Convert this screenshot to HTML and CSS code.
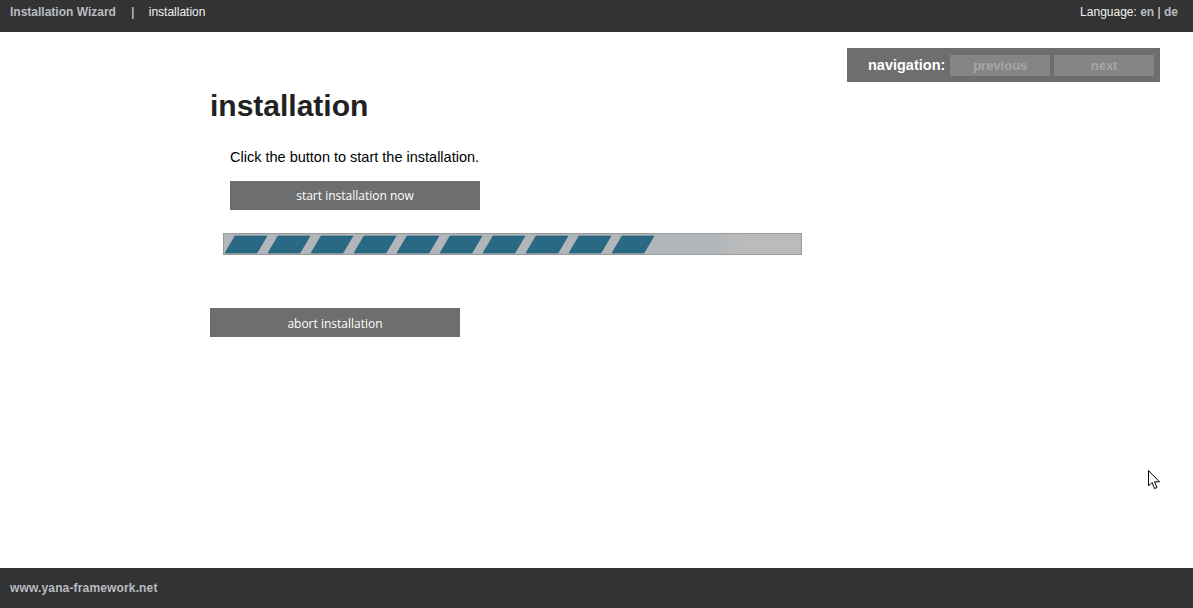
FILE: index.html
```html
<!DOCTYPE html>
<html>
<head>
<meta charset="utf-8">
<link rel="stylesheet" href="styles.css">
</head>
<body>
<div class="page">
  <header class="topbar">
    <div class="crumbs">
      <span class="brand">Installation Wizard</span>
      <span class="sep">|</span>
      <span class="current">installation</span>
    </div>
    <div class="lang">Language: <a class="lang-link">en</a> | <a class="lang-link">de</a></div>
  </header>
  <main class="main">
    <section class="content">
      <h1 class="title">installation</h1>
      <p class="intro">Click the button to start the installation.</p>
      <button class="btn btn-start">start installation now</button>
      <div class="progress">
        <svg class="stripes" width="578" height="20" viewBox="0 0 578 20">
          <g fill="#2a6984" stroke="#245d76" stroke-width="0.6">
            <polygon points="11,2 43,2 33,19 1,19"/>
            <polygon points="54,2 86,2 76,19 44,19"/>
            <polygon points="97,2 129,2 119,19 87,19"/>
            <polygon points="140,2 172,2 162,19 130,19"/>
            <polygon points="183,2 215,2 205,19 173,19"/>
            <polygon points="226,2 258,2 248,19 216,19"/>
            <polygon points="269,2 301,2 291,19 259,19"/>
            <polygon points="312,2 344,2 334,19 302,19"/>
            <polygon points="355,2 387,2 377,19 345,19"/>
            <polygon points="398,2 430,2 420,19 388,19"/>
          </g>
        </svg>
      </div>
      <button class="btn btn-abort">abort installation</button>
    </section>
    <nav class="navbox">
      <span class="nav-label">navigation:</span>
      <button class="nav-btn nav-first">previous</button>
      <button class="nav-btn">next</button>
    </nav>
    <svg class="cursor" width="14" height="22" viewBox="0 0 14 22">
      <path d="M0.5 0.5 L0.5 16 L4 12.5 L6.5 18.5 L9 17.5 L6.5 11.8 L11.5 11.8 Z" fill="#fff" stroke="#000" stroke-width="1"/>
    </svg>
  </main>
  <footer class="footer">www.yana-framework.net</footer>
</div>
</body>
</html>
```

FILE: styles.css
```css
html, body {
  margin: 0;
  padding: 0;
  background: #ffffff;
  font-family: "Liberation Sans", Arial, sans-serif;
}

.page {
  display: flex;
  flex-direction: column;
  height: 100vh;
}

.topbar {
  height: 32px;
  box-sizing: border-box;
  background: #333333;
  display: flex;
  justify-content: space-between;
  align-items: flex-start;
  padding: 5px 15px 0 10px;
  font-size: 12px;
  line-height: 14px;
}

.brand {
  font-weight: bold;
  color: #b9bcc0;
}

.sep {
  color: #f4eef4;
  margin: 0 11px 0 12px;
}

.current {
  color: #f0f0f0;
}

.lang {
  color: #f0f0f0;
}

.lang-link {
  color: #b9bcc0;
  font-weight: bold;
}

.main {
  flex: 1;
  position: relative;
  display: flex;
  justify-content: space-between;
  align-items: flex-start;
  padding: 0 33px 0 210px;
}

.content {
  padding-top: 57px;
  display: flex;
  flex-direction: column;
  align-items: flex-start;
}

.title {
  margin: 0;
  font-size: 30px;
  line-height: 34px;
  font-weight: bold;
  color: #222222;
}

.intro {
  margin: 26px 0 0 20px;
  font-size: 14.5px;
  line-height: 16px;
  color: #000000;
}

.btn {
  width: 250px;
  height: 29px;
  border: none;
  background: #6e6e6e;
  color: #ffffff;
  font-family: "Open Sans", sans-serif;
  font-size: 12px;
  padding: 0;
}

.btn-start {
  margin: 16px 0 0 20px;
}

.progress {
  margin: 23px 0 0 13px;
  width: 577px;
  height: 20px;
  border: 1px solid #9a9a9a;
  background: linear-gradient(to right, #b1b6ba 0%, #b1b6ba 85%, #bbbbbb 90%, #bbbbbb 100%);
  overflow: hidden;
}

.stripes {
  display: block;
}

.btn-abort {
  margin-top: 53px;
  padding-top: 2px;
}

.navbox {
  margin-top: 16px;
  width: 313px;
  height: 34px;
  box-sizing: border-box;
  background: #6e6e6e;
  display: flex;
  align-items: center;
  gap: 4px;
  padding: 0 6px 0 21px;
}

.nav-label {
  color: #ffffff;
  font-weight: bold;
  font-size: 14.5px;
}

.nav-btn {
  width: 100px;
  height: 21px;
  border: none;
  padding: 0;
  background: #858585;
  color: #a6a6a6;
  font-family: "Liberation Sans", Arial, sans-serif;
  font-weight: bold;
  font-size: 13px;
}

.nav-first {
  margin-left: 1px;
}

.cursor {
  position: absolute;
  left: 1148px;
  top: 438px;
}

.footer {
  height: 40px;
  box-sizing: border-box;
  background: #333333;
  color: #b9bcc0;
  font-weight: bold;
  font-size: 12px;
  line-height: 14px;
  letter-spacing: 0.15px;
  padding: 13px 10px 0;
}
```
